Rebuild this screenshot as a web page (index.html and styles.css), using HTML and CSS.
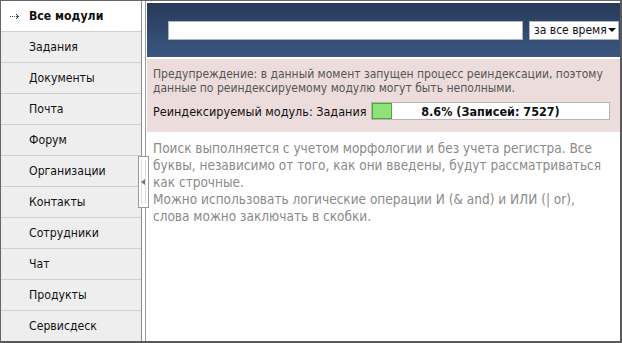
FILE: index.html
```html
<!DOCTYPE html>
<html lang="ru">
<head>
<meta charset="utf-8">
<link rel="stylesheet" href="styles.css">
</head>
<body>
<div class="frame">
  <nav class="sidebar">
    <div class="item active"><svg class="arrow" width="10" height="7" viewBox="0 0 10 7"><g fill="#444"><rect x="0" y="3" width="1" height="1"/><rect x="2" y="3" width="1" height="1"/><rect x="4" y="3" width="1" height="1"/><rect x="6" y="3" width="3" height="1"/><rect x="6" y="1" width="1" height="1"/><rect x="7" y="2" width="1" height="1"/><rect x="7" y="4" width="1" height="1"/><rect x="6" y="5" width="1" height="1"/></g></svg>Все модули</div>
    <div class="item">Задания</div>
    <div class="item">Документы</div>
    <div class="item">Почта</div>
    <div class="item">Форум</div>
    <div class="item">Организации</div>
    <div class="item">Контакты</div>
    <div class="item">Сотрудники</div>
    <div class="item">Чат</div>
    <div class="item">Продукты</div>
    <div class="item">Сервисдеск</div>
  </nav>
  <div class="splitter">
    <div class="handle"><span class="tri"></span></div>
  </div>
  <main class="content">
    <div class="header">
      <input class="search" type="text">
      <div class="select">за все время<span class="caret"></span></div>
    </div>
    <div class="warning">
      <p class="warn-text">Предупреждение: в данный момент запущен процесс реиндексации, поэтому данные по реиндексируемому модулю могут быть неполными.</p>
      <div class="module-row">
        <span class="module-label">Реиндексируемый модуль: Задания</span>
        <div class="progress">
          <div class="fill" style="width:8.6%"></div>
          <span class="progress-text">8.6% (Записей: 7527)</span>
        </div>
      </div>
    </div>
    <div class="help">
      Поиск выполняется с учетом морфологии и без учета регистра. Все буквы, независимо от того, как они введены, будут рассматриваться как строчные.<br>
      Можно использовать логические операции И (&amp; and) и ИЛИ (| or), слова можно заключать в скобки.
    </div>
  </main>
</div>
</body>
</html>
```
FILE: styles.css
```css
html, body {
  margin: 0;
  padding: 0;
  background: #fff;
}
body {
  font-family: "DejaVu Sans", sans-serif;
  font-stretch: condensed;
}
.frame {
  width: 622px;
  height: 343px;
  box-sizing: border-box;
  border-left: 1px solid #666;
  border-top: 1px solid #666;
  border-right: 2px solid #5a5a5a;
  border-bottom: 2px solid #5a5a5a;
  display: flex;
  overflow: hidden;
}
.sidebar {
  width: 140px;
  flex: none;
  border-right: 1px solid #8c8c8c;
  background: #eeeeee;
}
.item {
  height: 30px;
  border-bottom: 1px solid #cfcfcf;
  display: flex;
  align-items: center;
  padding-left: 28px;
  font-size: 12.2px;
  color: #111;
  white-space: nowrap;
}
.item.active {
  background: #fff;
  font-weight: bold;
  font-size: 12.2px;
  position: relative;
}
.arrow {
  position: absolute;
  left: 9px;
  top: 12px;
}
.splitter {
  width: 3px;
  flex: none;
  border-right: 1px solid #9a9a9a;
  position: relative;
}
.handle {
  position: absolute;
  left: -4px;
  top: 155px;
  width: 9px;
  height: 50px;
  background: #fff;
  border: 1px solid #9a9a9a;
  display: flex;
  align-items: center;
}
.handle::before, .handle::after {
  content: "";
  position: absolute;
  top: 3px;
  bottom: 3px;
  width: 1px;
  background: #ddd;
}
.handle::before { left: 2px; }
.handle::after { left: 6px; }
.tri {
  width: 0;
  height: 0;
  border-top: 3px solid transparent;
  border-bottom: 3px solid transparent;
  border-right: 4px solid #777;
  margin-left: 2px;
  position: relative;
  z-index: 1;
}
.content {
  flex: 1;
  padding: 2px 0 0 1px;
  min-width: 0;
}
.header {
  height: 54px;
  background: linear-gradient(#283a58, #3a5781);
  display: flex;
  align-items: center;
  padding: 0 0 0 21px;
  gap: 6px;
}
.search {
  width: 355px;
  height: 19px;
  box-sizing: border-box;
  border: 1px solid #aab3c4;
  margin: 0;
  padding: 0;
  background: #fff;
  flex: none;
}
.select {
  width: 90px;
  height: 19px;
  box-sizing: border-box;
  border: 1px solid #aab3c4;
  background: #fff;
  font-size: 12px;
  color: #111;
  display: flex;
  align-items: center;
  padding-left: 4px;
  gap: 1px;
  white-space: nowrap;
  flex: none;
}
.caret {
  width: 0;
  height: 0;
  border-left: 4px solid transparent;
  border-right: 4px solid transparent;
  border-top: 4px solid #111;
}
.warning {
  margin-top: 2px;
  background: #ecdcdc;
  height: 73px;
  box-sizing: border-box;
  padding: 8px 6px 0 6px;
}
.warn-text {
  margin: 0;
  font-size: 12px;
  line-height: 14px;
  color: #555;
}
.module-row {
  display: flex;
  align-items: center;
  margin-top: 7px;
  gap: 9px;
}
.module-label {
  font-size: 12.5px;
  color: #111;
  white-space: nowrap;
  flex: none;
  width: 209px;
}
.progress {
  position: relative;
  width: 239px;
  flex: none;
  height: 18px;
  box-sizing: border-box;
  border: 1px solid #b5b5b5;
  background: #fff;
  display: flex;
  align-items: center;
  justify-content: center;
}
.fill {
  position: absolute;
  left: 0;
  top: 0;
  bottom: 0;
  background: #8ee27a;
  border: 1px solid #4caa3a;
  box-sizing: border-box;
}
.progress-text {
  position: relative;
  font-size: 12.5px;
  font-weight: bold;
  color: #111;
}
.help {
  padding: 8px 10px 0 6px;
  font-size: 13.5px;
  line-height: 17px;
  color: #8a8a8a;
}
```
